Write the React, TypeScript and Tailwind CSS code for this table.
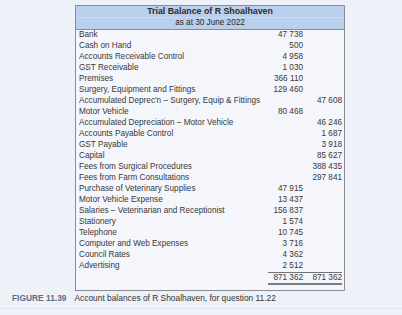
import React from 'react'

type Row = {
  label: string
  debit?: string
  credit?: string
}

const rows: Row[] = [
  { label: 'Bank', debit: '47 738' },
  { label: 'Cash on Hand', debit: '500' },
  { label: 'Accounts Receivable Control', debit: '4 958' },
  { label: 'GST Receivable', debit: '1 030' },
  { label: 'Premises', debit: '366 110' },
  { label: 'Surgery, Equipment and Fittings', debit: '129 460' },
  { label: "Accumulated Deprec'n – Surgery, Equip & Fittings", credit: '47 608' },
  { label: 'Motor Vehicle', debit: '80 468' },
  { label: 'Accumulated Depreciation – Motor Vehicle', credit: '46 246' },
  { label: 'Accounts Payable Control', credit: '1 687' },
  { label: 'GST Payable', credit: '3 918' },
  { label: 'Capital', credit: '85 627' },
  { label: 'Fees from Surgical Procedures', credit: '388 435' },
  { label: 'Fees from Farm Consultations', credit: '297 841' },
  { label: 'Purchase of Veterinary Supplies', debit: '47 915' },
  { label: 'Motor Vehicle Expense', debit: '13 437' },
  { label: 'Salaries – Veterinarian and Receptionist', debit: '156 837' },
  { label: 'Stationery', debit: '1 574' },
  { label: 'Telephone', debit: '10 745' },
  { label: 'Computer and Web Expenses', debit: '3 716' },
  { label: 'Council Rates', debit: '4 362' },
  { label: 'Advertising', debit: '2 512' },
]

const font = { fontFamily: '"Liberation Sans", Arial, sans-serif' }

const TrialBalance = () => {
  return (
    <div className="ml-[75px] mt-[5px] w-[270px] h-[286px] border border-[#8a8d94] bg-[#f4f6fb] flex flex-col">
      <div className="bg-[#b9cfec] border-b border-[#8a8d94] flex flex-col text-[#2a2a2a]">
        <div className="h-[12px] flex items-center justify-center text-[8.8px] font-bold border-b border-[#c9daf1]">
          Trial Balance of R Shoalhaven
        </div>
        <div className="h-[11px] flex items-center justify-center text-[8.2px]">
          as at 30 June 2022
        </div>
      </div>
      <div className="flex flex-col text-[8.2px] text-[#383838] pl-[3px] pr-[2px]">
        {rows.map((r) => (
          <div key={r.label} className="h-[11px] flex items-center">
            <span className="flex-1 truncate">{r.label}</span>
            <span className="w-[40px] text-right">{r.debit}</span>
            <span className="w-[39px] text-right">{r.credit}</span>
          </div>
        ))}
        <div className="flex justify-end">
          <div className="w-[74px] border-t border-[#6f7278] h-[11px] flex items-center">
            <span className="w-[35px] text-right">871 362</span>
            <span className="w-[39px] text-right">871 362</span>
          </div>
        </div>
        <div className="flex justify-end">
          <div className="w-[74px] border-t-2 border-[#7a7d83]" />
        </div>
      </div>
    </div>
  )
}

const App = () => {
  return (
    <div className="w-[402px] h-[315px] bg-[#eef1f8] overflow-hidden" style={font}>
      <TrialBalance />
      <div className="mt-[1px] pl-[12px] h-[12px] flex items-center gap-[8px] text-[8.4px]">
        <span className="font-bold text-[#5d6e8a]">FIGURE 11.39</span>
        <span className="text-[#333]">Account balances of R Shoalhaven, for question 11.22</span>
      </div>
      <div className="mt-[4px] h-px bg-[#e2e6ef]" />
    </div>
  )
}

export default App
